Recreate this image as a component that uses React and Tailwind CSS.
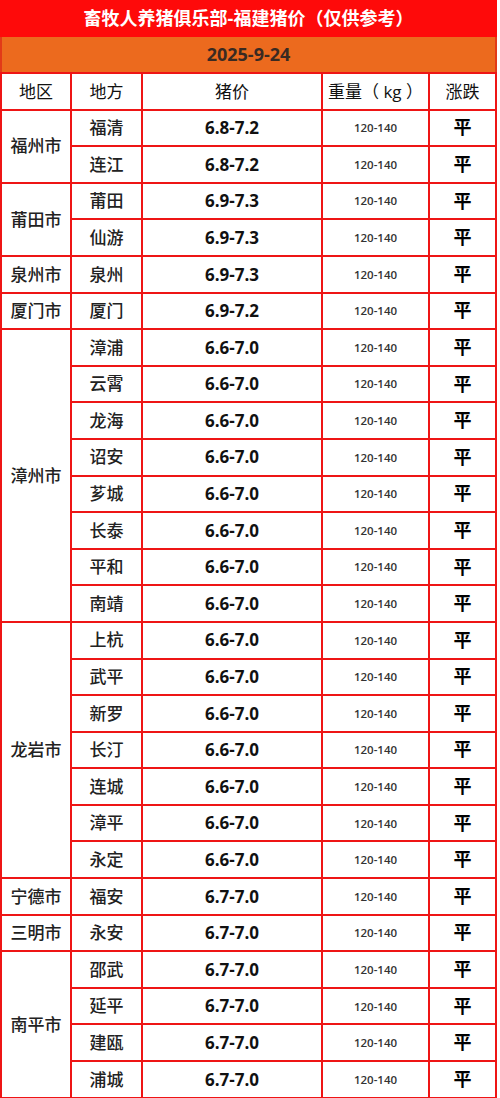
import React from "react";

const groups = [
  { city: "福州市", places: [["福清", "6.8-7.2"], ["连江", "6.8-7.2"]] },
  { city: "莆田市", places: [["莆田", "6.9-7.3"], ["仙游", "6.9-7.3"]] },
  { city: "泉州市", places: [["泉州", "6.9-7.3"]] },
  { city: "厦门市", places: [["厦门", "6.9-7.2"]] },
  {
    city: "漳州市",
    places: [
      ["漳浦", "6.6-7.0"],
      ["云霄", "6.6-7.0"],
      ["龙海", "6.6-7.0"],
      ["诏安", "6.6-7.0"],
      ["芗城", "6.6-7.0"],
      ["长泰", "6.6-7.0"],
      ["平和", "6.6-7.0"],
      ["南靖", "6.6-7.0"],
    ],
  },
  {
    city: "龙岩市",
    places: [
      ["上杭", "6.6-7.0"],
      ["武平", "6.6-7.0"],
      ["新罗", "6.6-7.0"],
      ["长汀", "6.6-7.0"],
      ["连城", "6.6-7.0"],
      ["漳平", "6.6-7.0"],
      ["永定", "6.6-7.0"],
    ],
  },
  { city: "宁德市", places: [["福安", "6.7-7.0"]] },
  { city: "三明市", places: [["永安", "6.7-7.0"]] },
  {
    city: "南平市",
    places: [
      ["邵武", "6.7-7.0"],
      ["延平", "6.7-7.0"],
      ["建瓯", "6.7-7.0"],
      ["浦城", "6.7-7.0"],
    ],
  },
];

const cell = "border-2 border-[#ee1515] text-center p-0";

function App() {
  return (
    <div
      className="w-[500px] bg-white"
      style={{ fontFamily: '"Open Sans", "Noto Sans CJK SC", sans-serif' }}
    >
      <div className="w-[497px]">
        <div className="h-[37px] bg-[#fe0a0a] flex items-center justify-center text-white font-bold text-[18px]">
          畜牧人养猪俱乐部-福建猪价（仅供参考）
        </div>
        <div className="h-[35px] bg-[#ec6a1e] border-x-2 border-[#e23a18] flex items-center justify-center text-[#3a2a22] font-bold text-[18px]">
          2025-9-24
        </div>
        <table className="w-full table-fixed border-collapse">
          <colgroup>
            <col className="w-[70px]" />
            <col className="w-[71px]" />
            <col className="w-[180px]" />
            <col className="w-[107px]" />
            <col />
          </colgroup>
          <thead>
            <tr className="h-[36.6px] text-[17px] text-[#111]">
              <th className={`${cell} font-normal`}>地区</th>
              <th className={`${cell} font-normal`}>地方</th>
              <th className={`${cell} font-normal`}>猪价</th>
              <th className={`${cell} font-normal`}>重量（ kg ）</th>
              <th className={`${cell} font-normal`}>涨跌</th>
            </tr>
          </thead>
          <tbody>
            {groups.map((g) =>
              g.places.map(([place, price], i) => (
                <tr key={place} className="h-[36.6px]">
                  {i === 0 && (
                    <td
                      rowSpan={g.places.length}
                      className={`${cell} text-[17px] font-medium text-[#222]`}
                    >
                      {g.city}
                    </td>
                  )}
                  <td className={`${cell} text-[17px] font-medium text-[#222]`}>
                    {place}
                  </td>
                  <td className={`${cell} text-[17px] font-bold text-[#111]`}>
                    {price}
                  </td>
                  <td className={`${cell} text-[11.5px] font-semibold text-[#333]`}>
                    120-140
                  </td>
                  <td className={`${cell} text-[18px] font-bold text-black`}>
                    平
                  </td>
                </tr>
              ))
            )}
          </tbody>
        </table>
      </div>
    </div>
  );
}

export default App;
